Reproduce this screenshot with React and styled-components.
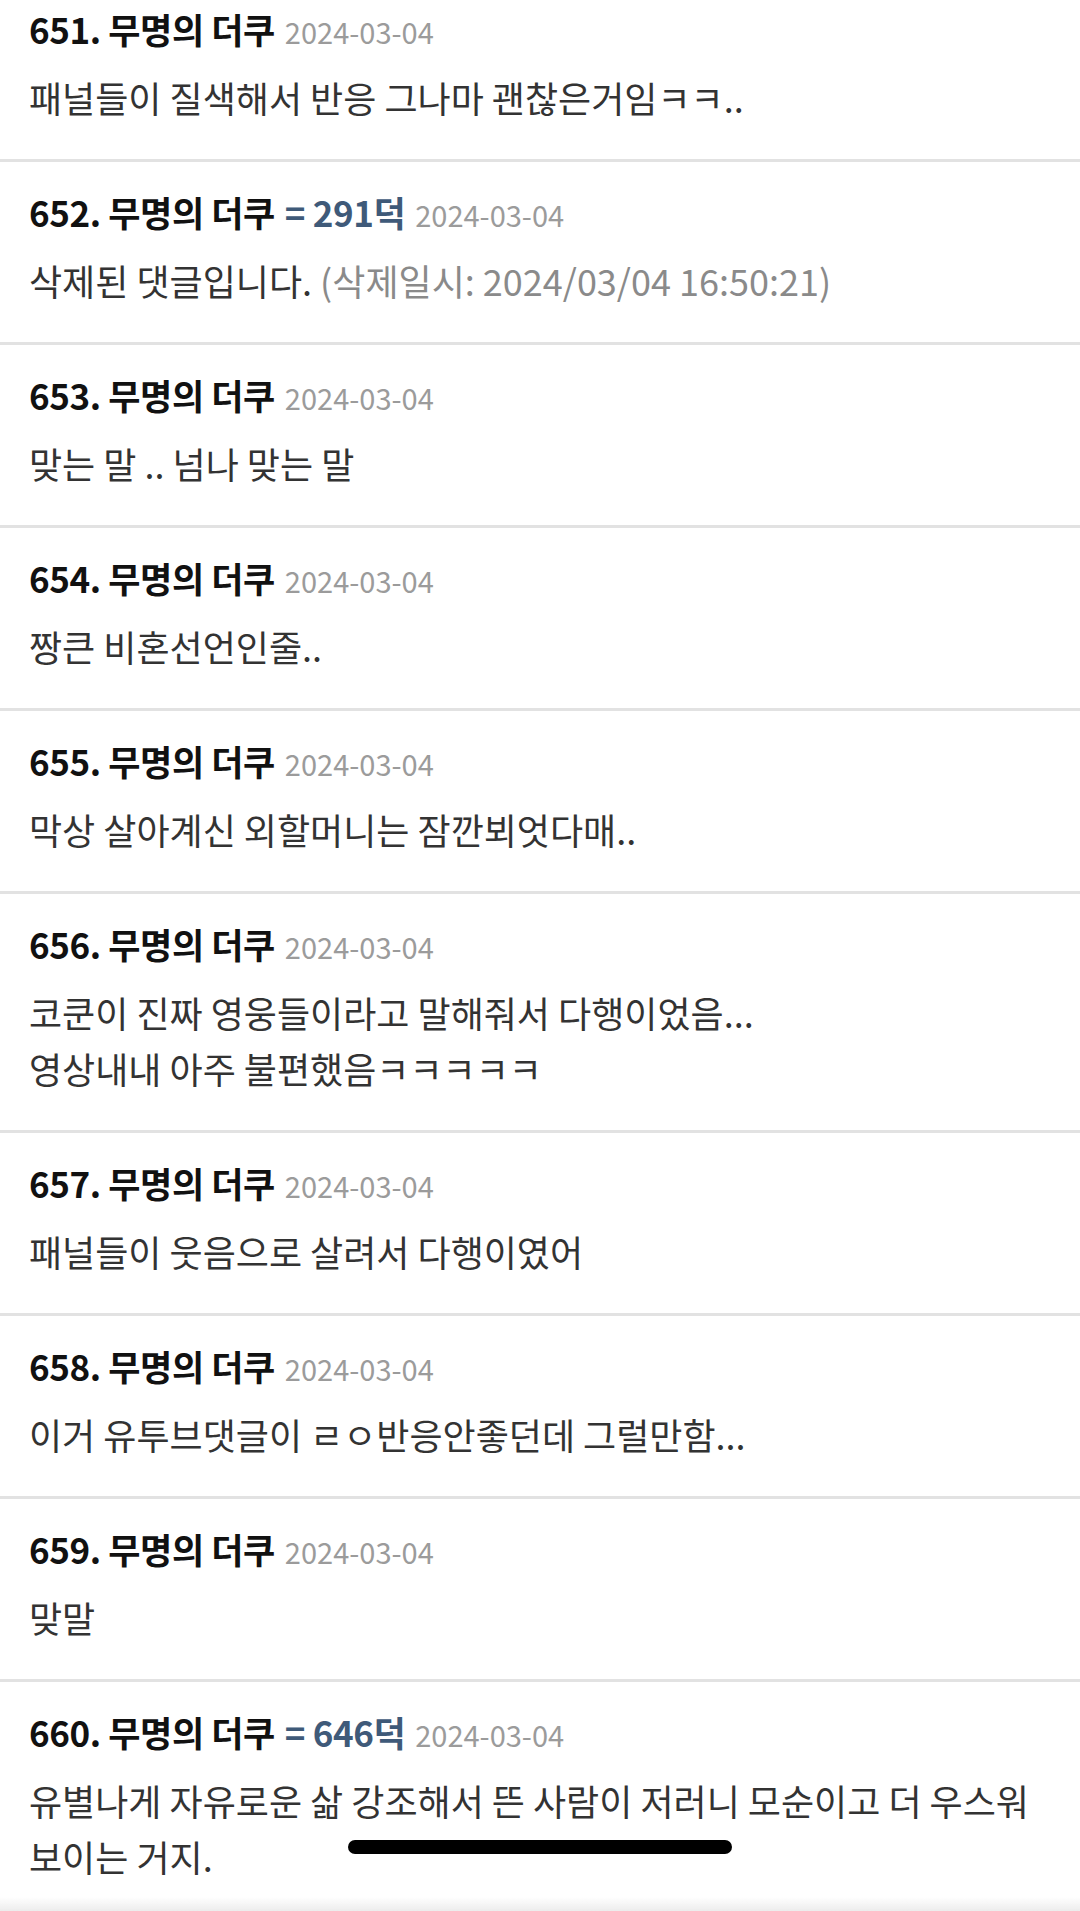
import React from 'react';
import styled, { createGlobalStyle } from 'styled-components';

const GlobalStyle = createGlobalStyle`
  html, body {
    margin: 0;
    padding: 0;
    background: #fff;
  }
  body {
    font-family: "Noto Sans CJK KR", "Noto Sans", sans-serif;
    -webkit-font-smoothing: antialiased;
  }
`;

const CommentList = styled.div`
  display: flex;
  flex-direction: column;
  min-height: 1911px;
  background: #fff;
`;

const Comment = styled.div`
  display: flex;
  flex-direction: column;
  padding: 26px 29px 34px;
  border-bottom: 3px solid #e2e2e2;

  &:first-child {
    padding-top: 5px;
  }
`;

const Header = styled.div`
  display: flex;
  align-items: baseline;
  gap: 10px;
  height: 48px;
  line-height: 48px;
  white-space: nowrap;
`;

const Author = styled.span`
  font-size: 35px;
  font-weight: 700;
  color: #111;
  letter-spacing: -0.4px;
`;

const Points = styled.span`
  font-size: 35px;
  font-weight: 700;
  color: #3f5a79;
  letter-spacing: -0.4px;
`;

const DateText = styled.span`
  font-size: 29px;
  color: #9b9b9b;
`;

const Body = styled.div`
  margin-top: 16px;
  font-size: 36px;
  line-height: 56px;
  color: #333;
  word-break: keep-all;
`;

const Muted = styled.span`
  color: #8a8a8a;
`;

const HomeIndicator = styled.div`
  position: fixed;
  left: 50%;
  bottom: 57px;
  transform: translateX(-50%);
  width: 384px;
  height: 14px;
  border-radius: 7px;
  background: #000;
`;

const BottomFade = styled.div`
  position: fixed;
  left: 0;
  right: 0;
  bottom: 0;
  height: 14px;
  background: linear-gradient(to bottom, rgba(238, 238, 238, 0), #ececec);
`;

const comments = [
  { no: 651, body: ['패널들이 질색해서 반응 그나마 괜찮은거임ㅋㅋ..'] },
  { no: 652, points: '291덕', deleted: '2024/03/04 16:50:21' },
  { no: 653, body: ['맞는 말 .. 넘나 맞는 말'] },
  { no: 654, body: ['짱큰 비혼선언인줄..'] },
  { no: 655, body: ['막상 살아계신 외할머니는 잠깐뵈엇다매..'] },
  { no: 656, body: ['코쿤이 진짜 영웅들이라고 말해줘서 다행이었음...', '영상내내 아주 불편했음ㅋㅋㅋㅋㅋ'] },
  { no: 657, body: ['패널들이 웃음으로 살려서 다행이였어'] },
  { no: 658, body: ['이거 유투브댓글이 ㄹㅇ반응안좋던데 그럴만함...'] },
  { no: 659, body: ['맞말'] },
  { no: 660, points: '646덕', body: ['유별나게 자유로운 삶 강조해서 뜬 사람이 저러니 모순이고 더 우스워 보이는 거지.'] },
];

export default function App() {
  return (
    <>
      <GlobalStyle />
      <CommentList>
        {comments.map((c) => (
          <Comment key={c.no}>
            <Header>
              <Author>{c.no}. 무명의 더쿠</Author>
              {c.points && <Points>= {c.points}</Points>}
              <DateText>2024-03-04</DateText>
            </Header>
            <Body>
              {c.deleted ? (
                <>
                  삭제된 댓글입니다. <Muted>(삭제일시: {c.deleted})</Muted>
                </>
              ) : (
                c.body.map((line, i) => <div key={i}>{line}</div>)
              )}
            </Body>
          </Comment>
        ))}
      </CommentList>
      <BottomFade />
      <HomeIndicator />
    </>
  );
}
